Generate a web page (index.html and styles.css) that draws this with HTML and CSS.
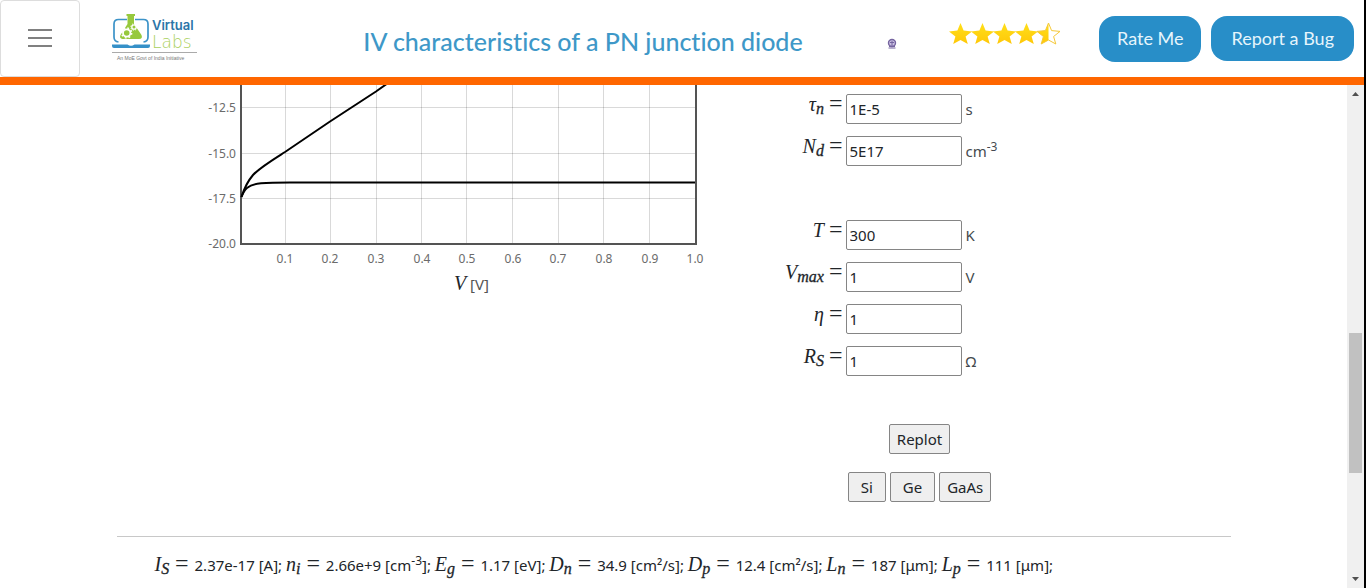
FILE: index.html
```html
<!DOCTYPE html>
<html lang="en">
<head>
<meta charset="utf-8">
<meta name="viewport" content="width=device-width, initial-scale=1">
<title>IV characteristics of a PN junction diode</title>
<link rel="stylesheet" href="styles.css">
</head>
<body>
<header class="header">
  <button class="menu" type="button" aria-label="Menu"><span class="menu-bar"></span><span class="menu-bar"></span><span class="menu-bar"></span></button>
  <a class="logo" href="#" aria-label="Virtual Labs">
    <svg width="88" height="50" viewBox="111 12 88 50">
      <path d="M127 19.500H118.500Q114 19.500 114 24V37Q114 41.500 118.500 42" fill="none" stroke="#3c93c8" stroke-width="1.700"/>
      <path d="M135 19.500H143.500Q148 19.500 148 24V37Q148 41.500 143.500 42" fill="none" stroke="#3c93c8" stroke-width="1.700"/>
      <path d="M112 44.500H127.500Q131 47 134.500 44.500H150V46Q150 48 148 48H114Q112 48 112 46Z" fill="#3590c8"/>
      <path d="M126.500 14H135V16H134V24L141.500 35Q143 39 139 39H122.500Q119 38.500 120.500 35L127.500 24V16H126.500Z" fill="#97c93d"/>
      <circle cx="126.700" cy="33" r="3.700" fill="none" stroke="#fff" stroke-width="1.800"/>
      <circle cx="126.700" cy="33" r="5" fill="none" stroke="#fff" stroke-width="1.400" stroke-dasharray="1.800 2.127"/>
      <circle cx="134" cy="27" r="2.200" fill="none" stroke="#fff" stroke-width="1.300"/>
      <circle cx="134" cy="27" r="3.200" fill="none" stroke="#fff" stroke-width="1" stroke-dasharray="1.200 1.313"/>
      <text class="logo-top" x="152" y="30">Virtual</text>
      <text class="logo-bottom" x="152" y="48">Labs</text>
      <path d="M112 52.500H197" stroke="#aaa" stroke-width="1"/>
      <text class="logo-note" x="117" y="60">An MoE Govt of India Initiative</text>
    </svg>
  </a>
  <h1 class="title">IV characteristics of a PN junction diode</h1>
  <svg class="badge" width="10" height="12" viewBox="0 0 10 12" aria-hidden="true">
    <circle cx="5" cy="5" r="3.500" fill="#c9bfe2" stroke="#75649f" stroke-width="1.400"/>
    <path d="M3 4.500H7M5 3V8M2 8.500H8M1.500 10H8.500" stroke="#75649f" stroke-width="1"/>
  </svg>
  <svg class="stars" width="112" height="24" viewBox="0 0 112 24" role="img" aria-label="4.5 out of 5 stars">
    <defs>
      <linearGradient id="gold" x1="0" y1="0" x2="0" y2="1"><stop offset="0" stop-color="#ffdf1a"/><stop offset="1" stop-color="#ffc808"/></linearGradient>
      <path id="star" d="M11.500 0L14.600 7.600L23 8.400L16.600 13.500L18.800 21L11.500 17L4.200 21L6.400 13.500L0 8.400L8.400 7.600Z"/>
      <clipPath id="left"><path d="M0 0H11.500V24H0Z"/></clipPath>
    </defs>
    <g fill="url(#gold)">
      <use href="#star"/><use href="#star" x="22"/><use href="#star" x="44"/><use href="#star" x="66"/>
      <g transform="translate(88 0)"><use href="#star" clip-path="url(#left)"/><use href="#star" fill="none" stroke="#f5c838" stroke-width="1"/></g>
    </g>
  </svg>
  <div class="actions">
    <button class="pill pill-strong" type="button">Rate Me</button>
    <button class="pill" type="button">Report a Bug</button>
  </div>
</header>
<div class="viewport">
  <main class="content">
    <div class="container">
      <div class="lab">
        <svg class="plot" width="510" height="215" viewBox="200 85 510 215" role="img" aria-label="Current against voltage">
          <path class="grid" d="M241 107.500H695M241 153.500H695M241 198.500H695M285.500 85V244M330.500 85V244M376.500 85V244M421.500 85V244M466.500 85V244M512.500 85V244M558.500 85V244M603.500 85V244M649.500 85V244"/>
          <path class="axis" d="M241 85V244H696V85"/>
          <path class="curve" d="M241.500 197C244 189 247 182 253 175C260 167.500 270 161.500 285 152L330 121.500L376 91.500L388 83"/>
          <path class="curve" d="M241.500 197C244 190 247 184.500 261 183.200C270 182.500 278 182.500 290 182.500H695"/>
          <g class="ticks ticks-y"><text x="236" y="112">-12.5</text><text x="236" y="158">-15.0</text><text x="236" y="203">-17.5</text><text x="236" y="248">-20.0</text></g>
          <g class="ticks ticks-x"><text x="285" y="263">0.1</text><text x="330" y="263">0.2</text><text x="376" y="263">0.3</text><text x="422" y="263">0.4</text><text x="467" y="263">0.5</text><text x="513" y="263">0.6</text><text x="558" y="263">0.7</text><text x="604" y="263">0.8</text><text x="650" y="263">0.9</text><text x="695" y="263">1.0</text></g>
          <text class="axis-name" x="454" y="290"><tspan class="axis-var">V</tspan> [V]</text>
        </svg>
        <form class="form">
          <div class="fields">
            <label for="tau"><var>τ<sub>n</sub></var> <span class="eq">=</span></label><input id="tau" value="1E-5"><span class="unit">s</span>
            <label for="nd"><var>N<sub>d</sub></var> <span class="eq">=</span></label><input id="nd" value="5E17"><span class="unit">cm<sup>-3</sup></span>
          </div>
          <div class="fields">
            <label for="temp"><var>T</var> <span class="eq">=</span></label><input id="temp" value="300"><span class="unit">K</span>
            <label for="vmax"><var>V<sub>max</sub></var> <span class="eq">=</span></label><input id="vmax" value="1"><span class="unit">V</span>
            <label for="eta"><var>η</var> <span class="eq">=</span></label><input id="eta" value="1"><span class="unit"></span>
            <label for="rs"><var>R<sub>S</sub></var> <span class="eq">=</span></label><input id="rs" value="1"><span class="unit">Ω</span>
          </div>
          <div class="buttons">
            <div class="button-row"><button class="btn" type="button">Replot</button></div>
            <div class="button-row"><button class="btn btn-short" type="button">Si</button><button class="btn btn-short" type="button">Ge</button><button class="btn" type="button">GaAs</button></div>
          </div>
        </form>
      </div>
      <hr class="rule">
      <p class="results"><var>I<sub>S</sub></var> <span class="eq">=</span> 2.37e-17 [A]; <var>n<sub>i</sub></var> <span class="eq">=</span> 2.66e+9 [cm<sup>-3</sup>]; <var>E<sub>g</sub></var> <span class="eq">=</span> 1.17 [eV]; <var>D<sub>n</sub></var> <span class="eq">=</span> 34.9 [cm²/s]; <var>D<sub>p</sub></var> <span class="eq">=</span> 12.4 [cm²/s]; <var>L<sub>n</sub></var> <span class="eq">=</span> 187 [μm]; <var>L<sub>p</sub></var> <span class="eq">=</span> 111 [μm];</p>
    </div>
  </main>
  <div class="scrollbar" aria-hidden="true">
    <svg width="17" height="17" viewBox="0 0 17 17"><path d="M5 11L8.500 7L12 11Z" fill="#505050"/></svg>
    <div class="track"><div class="thumb"></div></div>
    <svg width="17" height="17" viewBox="0 0 17 17"><path d="M5 6L8.500 10L12 6Z" fill="#505050"/></svg>
  </div>
</div>
</body>
</html>
```
FILE: styles.css
```css
* { box-sizing: border-box; }
body {
  margin: 0;
  height: 100vh;
  display: flex;
  flex-direction: column;
  overflow: hidden;
  border-right: 2px solid #000;
  background: #fff;
  color: #212529;
  font: 15px/24px "Noto Sans", sans-serif;
}
.header {
  display: flex;
  align-items: flex-start;
  flex: none;
  border-bottom: 8px solid #f60;
}
.menu {
  width: 80px;
  height: 77px;
  padding: 0 0 2px;
  display: flex;
  flex-direction: column;
  align-items: center;
  justify-content: center;
  gap: 6px;
  background: #fff;
  border: 1px solid #ddd;
  border-radius: 4px;
}
.menu-bar { width: 24px; height: 2px; background: #808080; }
.logo { margin: 12px 0 0 31px; }
.logo svg { display: block; }
.logo-top { font: 600 13px Inter, sans-serif; fill: #2c75a8; }
.logo-bottom { font: 300 17px "DejaVu Sans", sans-serif; fill: #a9d05b; }
.logo-note { font: 5px "Liberation Sans", sans-serif; fill: #777; }
.title {
  flex: 1;
  margin: 25px 0 0;
  padding-left: 80px;
  text-align: center;
  white-space: nowrap;
  font: 500 25px/32px Lato, sans-serif;
  font-variant-ligatures: none;
  color: #3e98c8;
}
.badge { margin: 38px 52px 0 0; }
.stars { margin-top: 23px; }
.actions { display: flex; gap: 10px; margin: 16px 10px 0 38px; }
.pill {
  height: 45px;
  padding: 0 20px 1px;
  border: 0;
  border-radius: 16px;
  background: #288ec8;
  color: #e6f5fc;
  white-space: nowrap;
  font: 18px Lato, sans-serif;
}
.pill-strong { height: 46px; padding: 0 18px 2px; }
.viewport { flex: 1; min-height: 0; display: flex; }
.content { flex: 1; min-width: 0; overflow: hidden; }
.container { max-width: 1114px; margin: 0 auto; }
.lab { display: flex; gap: 65px; padding-left: 83px; }
.plot { flex: none; }
.grid { fill: none; stroke: #000; stroke-opacity: .15; }
.axis { fill: none; stroke: #545454; stroke-width: 2; }
.curve { fill: none; stroke: #000; stroke-width: 2; }
.ticks { font-size: 12px; fill: #6b6b6b; }
.ticks-y { text-anchor: end; }
.ticks-x { text-anchor: middle; }
.axis-name { font-size: 15px; fill: #545454; }
.axis-var { font: italic 20px "Liberation Serif", serif; fill: #212529; }
.form { width: 290px; padding-top: 9px; }
.fields {
  display: grid;
  grid-template-columns: 68px 116px 1fr;
  gap: 12px 3px;
}
.fields + .fields { margin-top: 54px; }
label { line-height: 18px; white-space: nowrap; display: flex; justify-content: flex-end; align-items: baseline; height: 18px; }
var { font: italic 20px/18px "Liberation Serif", serif; }
sub { font-size: 16px; line-height: 0; vertical-align: -3px; -webkit-text-stroke: 0.3px; }
sup { font-size: 12px; line-height: 0; vertical-align: 6px; }
.eq { margin: 0 2px; font: 24px/18px "Liberation Serif", serif; }
label .eq { margin: 0 0 0 5px; }
input {
  width: 100%;
  height: 30px;
  padding: 1px 3px;
  border: 1px solid #858585;
  border-radius: 2px;
  background: #fff;
  color: #212529;
  font: 15px "Noto Sans", sans-serif;
}
.unit { padding: 3px 0 0 1px; color: #454a4e; }
.buttons { display: grid; gap: 18px; margin-top: 48px; }
.button-row { display: flex; justify-content: center; gap: 4px; }
.btn {
  height: 30px;
  padding: 0 7px;
  border: 1px solid #858585;
  border-radius: 2px;
  background: #efefef;
  color: #212529;
  font: 15px "Noto Sans", sans-serif;
}
.btn-short { padding: 0 12px; }
.rule { margin: 34px 0 16px; border: 0; border-top: 1px solid #c8c8c8; }
.results { margin: 0; padding-left: 38px; white-space: nowrap; }
.scrollbar {
  flex: none;
  width: 17px;
  display: flex;
  flex-direction: column;
  background: #f0f0f0;
}
.scrollbar svg { display: block; flex: none; }
.track { flex: 1; display: flex; flex-direction: column; padding: 0 2px; }
.track::before { content: ""; flex: 231; }
.track::after { content: ""; flex: 98; }
.thumb { flex: 140; background: #c1c1c1; }
```
